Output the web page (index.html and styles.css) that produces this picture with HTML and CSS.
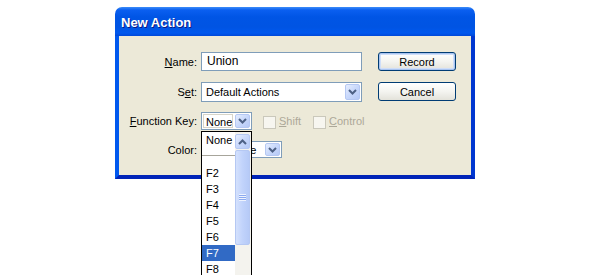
FILE: index.html
```html
<!DOCTYPE html>
<html lang="en">
<head>
    <meta charset="UTF-8">
    <meta name="viewport" content="width=device-width, initial-scale=1.0">
    <title>New Action</title>
    <link rel="stylesheet" href="styles.css">
</head>
<body>

    <div class="window">
        <div class="titleBar">New Action</div>

        <div class="frame">
            <div class="content">

                <div class="row rowName">
                    <label class="lbl"><u>N</u>ame:</label>
                    <div class="textBox">Union</div>
                    <button class="btn btnDefault">Record</button>
                </div>

                <div class="row rowSet">
                    <label class="lbl">S<u>e</u>t:</label>
                    <div class="combo comboSet">
                        <span class="comboText">Default Actions</span>
                        <span class="comboBtn">
                            <svg width="9" height="6" viewBox="0 0 9 6"><path d="M1 1 L4.5 4.5 L8 1" fill="none" stroke="#4d6185" stroke-width="2"/></svg>
                        </span>
                    </div>
                    <button class="btn">Cancel</button>
                </div>

                <div class="row rowKey">
                    <label class="lbl"><u>F</u>unction Key:</label>
                    <div class="combo comboKey">
                        <span class="comboText keyText">None</span>
                        <span class="comboBtn">
                            <svg width="9" height="6" viewBox="0 0 9 6"><path d="M1 1 L4.5 4.5 L8 1" fill="none" stroke="#4d6185" stroke-width="2"/></svg>
                        </span>

                        <div class="dropList">
                            <div class="listItems">
                                <div class="item">None</div>
                                <div class="item sep"></div>
                                <div class="item">F2</div>
                                <div class="item">F3</div>
                                <div class="item">F4</div>
                                <div class="item">F5</div>
                                <div class="item">F6</div>
                                <div class="item selected">F7</div>
                                <div class="item">F8</div>
                            </div>
                            <div class="scrollBar">
                                <div class="scrollUp">
                                    <svg width="9" height="6" viewBox="0 0 9 6"><path d="M1 5 L4.5 1.5 L8 5" fill="none" stroke="#4d6185" stroke-width="2"/></svg>
                                </div>
                                <div class="thumb">
                                    <span class="grip"></span>
                                </div>
                            </div>
                        </div>
                    </div>

                    <span class="check checkShift"></span>
                    <span class="dim"><u>S</u>hift</span>
                    <span class="check checkControl"></span>
                    <span class="dim"><u>C</u>ontrol</span>
                </div>

                <div class="row rowColor">
                    <label class="lbl">Color:</label>
                    <div class="combo comboColor">
                        <span class="comboText colorText">None</span>
                        <span class="comboBtn">
                            <svg width="9" height="6" viewBox="0 0 9 6"><path d="M1 1 L4.5 4.5 L8 1" fill="none" stroke="#4d6185" stroke-width="2"/></svg>
                        </span>
                    </div>
                </div>

            </div>
        </div>
    </div>

</body>
</html>
```

FILE: styles.css
```css
html{
    height: 275px;
    overflow: hidden;
}

body{
    margin: 0;
    height: 275px;
    overflow: hidden;
    background-color: #fff;
    font-family: "Liberation Sans", Arial, sans-serif;
    font-size: 11px;
    color: #000;
}

.window{
    width: 360px;
    margin-left: 115px;
    padding-top: 7px;
}

.titleBar{
    height: 29px;
    box-sizing: border-box;
    padding: 9px 0 0 6px;
    border-radius: 7px 7px 0 0;
    background: linear-gradient(to bottom, #3d8df8 0px, #0a5ff0 3px, #0055e5 10px, #0054e3 20px, #0058ee 26px, #0048d8 29px);
    color: #fff;
    font-size: 13px;
    font-weight: bold;
    line-height: 13px;
    text-shadow: 1px 1px #0a1a86;
}

.frame{
    border: 4px solid #0055e5;
    border-top: none;
    border-left-color: #0058ee;
    border-right-color: #0037d0;
    border-bottom-color: #0024b8;
}

.content{
    background-color: #ece9d8;
    padding: 16px 0 17px 0;
}

.row{
    display: flex;
    align-items: flex-start;
}

.lbl{
    width: 82px;
    padding-right: 4px;
    box-sizing: border-box;
    text-align: right;
    align-self: center;
}

.rowName{
    height: 19px;
}

.rowSet{
    height: 20px;
    margin-top: 11px;
}

.rowKey{
    height: 18px;
    margin-top: 10px;
    position: relative;
    z-index: 5;
}

.rowColor{
    height: 17px;
    margin-top: 11px;
}

.textBox{
    width: 161px;
    height: 19px;
    box-sizing: border-box;
    border: 1px solid #7f9db9;
    background-color: #fff;
    padding-left: 5px;
    font-size: 12px;
    line-height: 17px;
}

.btn{
    width: 78px;
    height: 19px;
    margin-left: 16px;
    padding: 0;
    border: 1px solid #003c74;
    border-radius: 3px;
    background: linear-gradient(to bottom, #fff 0%, #f4f4f0 50%, #e3e2da 100%);
    font-family: "Liberation Sans", Arial, sans-serif;
    font-size: 11px;
    color: #000;
}

.btnDefault{
    box-shadow: inset 0 0 0 1px #a9c4f0, inset 0 0 0 2px #cfdef8;
}

.combo{
    display: flex;
    box-sizing: border-box;
    border: 1px solid #7f9db9;
    background-color: #fff;
    padding: 1px;
    position: relative;
}

.comboText{
    flex: 1;
    padding-left: 3px;
    line-height: 16px;
    white-space: nowrap;
    overflow: hidden;
}

.comboBtn{
    width: 15px;
    display: flex;
    align-items: center;
    justify-content: center;
    box-sizing: border-box;
    border: 1px solid #b5c8f3;
    border-radius: 2px;
    background: linear-gradient(135deg, #e6eefe 0%, #c8d8fb 50%, #b5c9f6 100%);
}

.comboSet{
    width: 161px;
    height: 20px;
}

.comboSet .comboText{
    line-height: 17px;
}

.comboKey{
    width: 51px;
    height: 18px;
}

.keyText{
    border: 1px solid #d8d5c8;
    margin-right: 2px;
    padding-left: 2px;
    line-height: 14px;
}

.comboColor{
    width: 81px;
    height: 17px;
}

.colorText{
    padding-left: 27px;
    line-height: 15px;
}

.check{
    width: 13px;
    height: 13px;
    box-sizing: border-box;
    border: 1px solid #cac8bb;
    background-color: #f7f6f0;
    margin-top: 4px;
}

.checkShift{
    margin-left: 11px;
}

.checkControl{
    margin-left: 12px;
}

.dim{
    color: #aca899;
    margin-left: 3px;
    align-self: center;
}

.dropList{
    position: absolute;
    left: -1px;
    top: 18px;
    width: 51px;
    height: 145px;
    box-sizing: border-box;
    border: 1px solid #000;
    border-bottom: none;
    background-color: #fff;
    display: flex;
    overflow: hidden;
}

.listItems{
    width: 33px;
}

.item{
    height: 16px;
    line-height: 16px;
    padding-left: 4px;
    font-size: 11px;
}

.item.sep{
    height: 17px;
    position: relative;
}

.item.sep::after{
    content: "";
    position: absolute;
    left: 0;
    right: 0;
    top: 7px;
    border-top: 1px solid #a7a59b;
}

.selected{
    background-color: #316ac5;
    color: #fff;
}

.scrollBar{
    width: 16px;
    background-color: #f4f3ee;
    display: flex;
    flex-direction: column;
    padding-top: 2px;
    box-sizing: border-box;
}

.scrollUp{
    width: 15px;
    height: 15px;
    box-sizing: border-box;
    border: 1px solid #b5c8f3;
    border-radius: 2px;
    background: linear-gradient(135deg, #e6eefe 0%, #c8d8fb 50%, #b5c9f6 100%);
    display: flex;
    align-items: center;
    justify-content: center;
}

.thumb{
    width: 15px;
    height: 95px;
    margin-top: 1px;
    box-sizing: border-box;
    border: 1px solid #b5c8f3;
    border-radius: 2px;
    background: linear-gradient(to right, #d4e1fd 0%, #c1d3fb 50%, #b6caf7 100%);
    display: flex;
    align-items: center;
    justify-content: center;
}

.grip{
    width: 7px;
    height: 7px;
    background: repeating-linear-gradient(to bottom, #eef3fe 0px, #eef3fe 1px, #8caaf0 1px, #8caaf0 2px);
}
```
